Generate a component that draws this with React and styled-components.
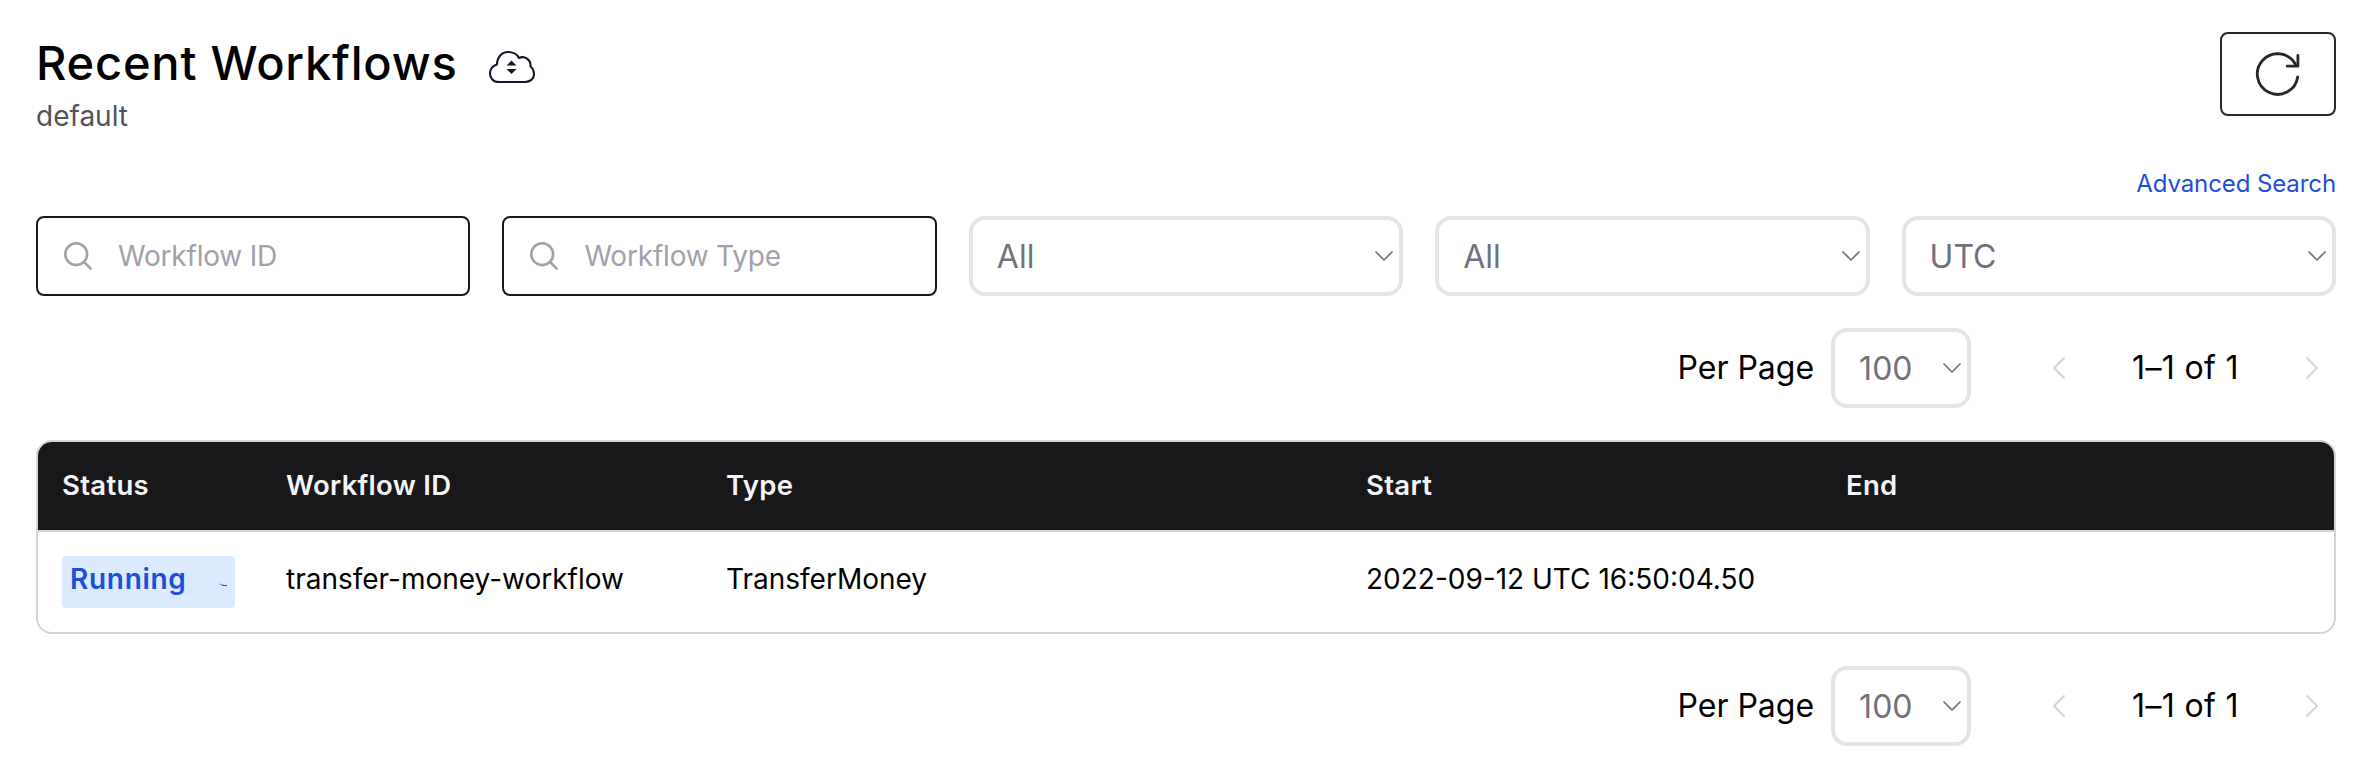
import React from 'react';
import styled, { createGlobalStyle } from 'styled-components';

const GlobalStyle = createGlobalStyle`
  *, *::before, *::after { box-sizing: border-box; }
  body { margin: 0; background: #fff; color: #000; font-family: Inter, "Liberation Sans", sans-serif; }
  svg { display: block; flex: none; fill: none; stroke: currentColor; overflow: visible; }
`;

const Page = styled.main`
  display: flex;
  flex-direction: column;
  padding: 32px 32px 28px 36px;
`;

const Header = styled.header`
  display: flex;
  justify-content: space-between;
  align-items: flex-start;
`;

const TitleRow = styled.div`
  display: flex;
  align-items: center;
  gap: 32px;
  height: 64px;
`;

const Title = styled.h1`
  margin: 0;
  width: 421px;
  white-space: nowrap;
  font-size: 47px;
  font-weight: 500;
  line-height: 62px;
  letter-spacing: 0.8px;
  height: 64px;
`;

const CloudButton = styled.span`
  color: #0f172a;
  padding-top: 6px;
`;

const Namespace = styled.p`
  margin: 0;
  font-size: 28px;
  line-height: 40px;
  color: #52525b;
`;

const RefreshButton = styled.button`
  display: flex;
  align-items: center;
  justify-content: center;
  width: 116px;
  height: 84px;
  padding: 0;
  border: 2px solid #27272a;
  border-radius: 8px;
  background: #fff;
  color: #27272a;
`;

const AdvancedLink = styled.a`
  align-self: flex-end;
  margin-top: 32px;
  font-size: 24px;
  line-height: 32px;
  letter-spacing: -0.1px;
  color: #1d4ed8;
`;

const Filters = styled.div`
  display: grid;
  grid-template-columns: repeat(5, minmax(0, 1fr));
  gap: 32px;
  margin-top: 16px;
`;

const SearchField = styled.label`
  display: flex;
  align-items: center;
  gap: 26px;
  height: 80px;
  padding: 0 26px;
  border: 2px solid #18181b;
  border-radius: 8px;
  color: #a1a1aa;
`;

const SearchInput = styled.input`
  flex: 1;
  min-width: 0;
  padding: 0;
  border: 0;
  outline: 0;
  background: none;
  font: 400 28px/40px Inter, "Liberation Sans", sans-serif;
  letter-spacing: -0.2px;
  &::placeholder { color: #a1a1aa; opacity: 1; }
`;

const SelectBox = styled.div`
  display: flex;
  align-items: center;
  justify-content: space-between;
  width: ${(p) => p.$width || 'auto'};
  height: 80px;
  padding: 0 6px 0 24px;
  border: 4px solid #e4e4e7;
  border-radius: 16px;
  font-size: 32px;
  line-height: 48px;
  color: #71717a;
`;

const SelectValue = styled.span`
  padding-top: 2px;
`;

const PaginationBar = styled.div`
  display: flex;
  align-items: center;
  justify-content: flex-end;
  margin-top: 32px;
  padding-right: 17px;
  font-size: 32px;
  line-height: 48px;
`;

const PerPageLabel = styled.span`
  margin-right: 17px;
`;

const Pager = styled.div`
  display: flex;
  align-items: center;
  gap: 67px;
  margin-left: 81px;
`;

const PageRange = styled.span`
  letter-spacing: 0.35px;
`;

const PageArrow = styled.span`
  color: #d4d4d8;
`;

const Table = styled.div`
  margin-top: 32px;
  border: 2px solid #d4d4d8;
  border-radius: 16px;
  overflow: hidden;
`;

const Row = styled.div`
  display: grid;
  grid-template-columns: 224px 440px 640px 480px 1fr;
  padding: 24px 0 0 24px;
  height: 100px;
  font-size: 28px;
  line-height: 46px;
`;

const HeadRow = styled(Row)`
  align-items: center;
  height: 90px;
  padding: 0 0 2px 24px;
  border-bottom: 2px solid #d4d4d8;
  background: #18181b;
  color: #f4f4f5;
  font-size: 27.5px;
  font-weight: 600;
  letter-spacing: 0.3px;
`;

const Badge = styled.span`
  display: flex;
  width: 173px;
  height: 52px;
  padding: 0 8px;
  justify-content: space-between;
  border-radius: 4px;
  background: #dbeafe;
  color: #1d4ed8;
  font-size: 28px;
  font-weight: 600;
  letter-spacing: 0.7px;
`;

const CloudIcon = () => (
  <svg width="46" height="32" viewBox="0 0 46 32" strokeWidth="2.1" strokeLinejoin="round">
    <path d="M10 31H36C41 31 45 28 45 23.500C45 20 43.500 17 41.500 15.500C42 8.500 35.500 4.500 30 7C28 3 24 1 19 1C13 1 8 6 8 13.500C3.500 15 1 18 1 22.500C1 27 4 31 10 31Z" />
    <path d="M17.500 14.500L22.500 9.500L27.500 14.500ZM17.500 18L22.500 23L27.500 18Z" fill="currentColor" stroke="none" />
  </svg>
);

const RefreshIcon = () => (
  <svg width="44" height="44" viewBox="0 0 44 44" strokeWidth="2.8" strokeLinecap="round" strokeLinejoin="round">
    <path d="M41.700 25A20.300 20.300 0 1 1 39.500 12.500" />
    <path d="M41.900 3.500V14.200H31.200" />
  </svg>
);

const SearchIcon = () => (
  <svg width="28" height="28" viewBox="0 0 28 28" strokeWidth="2.600" strokeLinecap="round">
    <circle cx="12.200" cy="12.200" r="10.900" />
    <path d="M20 20L26.700 26.700" />
  </svg>
);

const DownIcon = () => (
  <svg width="18" height="10" viewBox="0 0 18 10" strokeWidth="1.700" strokeLinecap="round" strokeLinejoin="round">
    <path d="M1 1L9 9L17 1" />
  </svg>
);

const SideIcon = ({ d }) => (
  <svg width="13" height="22" viewBox="0 0 13 22" strokeWidth="2" strokeLinecap="round" strokeLinejoin="round">
    <path d={d} />
  </svg>
);

const HeartbeatIcon = () => (
  <svg width="8" height="46" viewBox="0 0 8 46" strokeWidth="1">
    <path d="M0.500 28.500L2 28L5 29.500" opacity="0.6" />
    <path d="M3 29.500H8" />
  </svg>
);

const Select = ({ value, width }) => (
  <SelectBox $width={width}>
    <SelectValue>{value}</SelectValue>
    <DownIcon />
  </SelectBox>
);

const Pagination = () => (
  <PaginationBar>
    <PerPageLabel>Per Page</PerPageLabel>
    <Select value="100" width="140px" />
    <Pager>
      <PageArrow><SideIcon d="M12 1L2 11L12 21" /></PageArrow>
      <PageRange>1–1 of 1</PageRange>
      <PageArrow><SideIcon d="M1 1L11 11L1 21" /></PageArrow>
    </Pager>
  </PaginationBar>
);

export default function App() {
  return (
    <Page>
      <GlobalStyle />
      <Header>
        <div>
          <TitleRow>
            <Title>Recent Workflows</Title>
            <CloudButton><CloudIcon /></CloudButton>
          </TitleRow>
          <Namespace>default</Namespace>
        </div>
        <RefreshButton aria-label="Refresh"><RefreshIcon /></RefreshButton>
      </Header>
      <AdvancedLink>Advanced Search</AdvancedLink>
      <Filters>
        <SearchField><SearchIcon /><SearchInput placeholder="Workflow ID" /></SearchField>
        <SearchField><SearchIcon /><SearchInput placeholder="Workflow Type" /></SearchField>
        <Select value="All" />
        <Select value="All" />
        <Select value="UTC" />
      </Filters>
      <Pagination />
      <Table>
        <HeadRow>
          <span>Status</span>
          <span>Workflow ID</span>
          <span>Type</span>
          <span>Start</span>
          <span>End</span>
        </HeadRow>
        <Row>
          <Badge>Running<HeartbeatIcon /></Badge>
          <span>transfer-money-workflow</span>
          <span>TransferMoney</span>
          <span>2022-09-12 UTC 16:50:04.50</span>
          <span />
        </Row>
      </Table>
      <Pagination />
    </Page>
  );
}
